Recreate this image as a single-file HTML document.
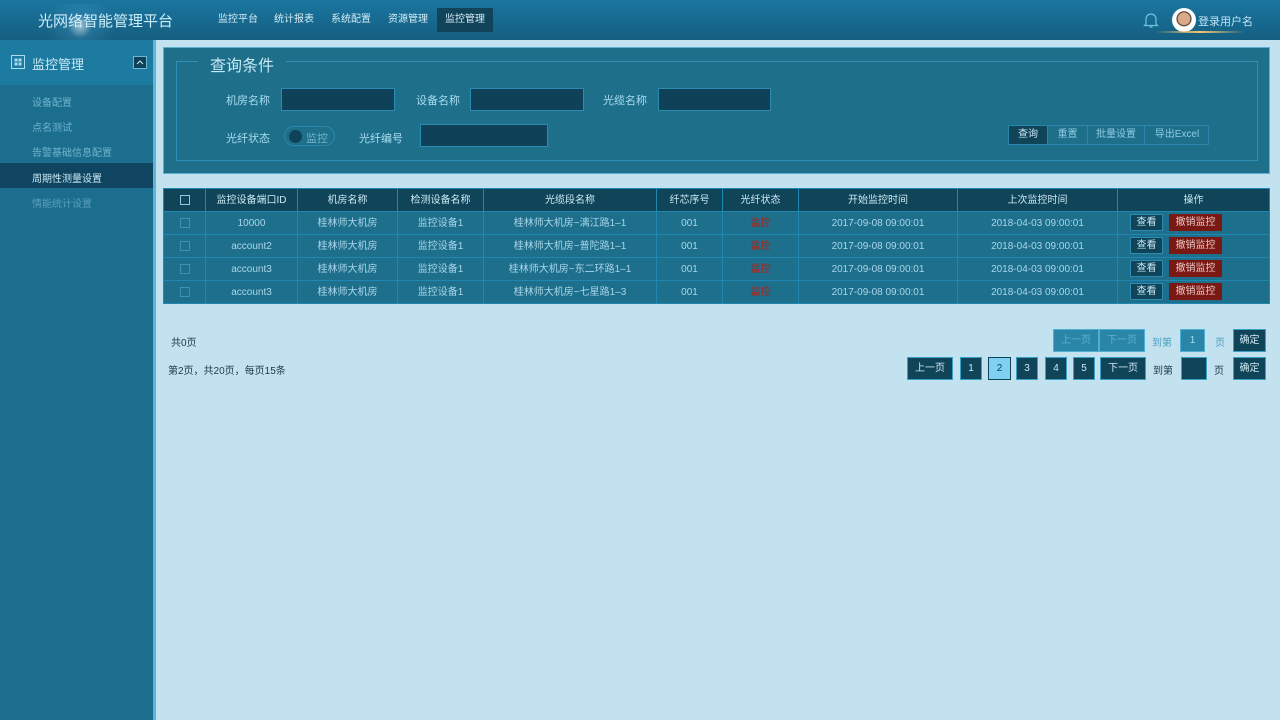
<!DOCTYPE html>
<html><head><meta charset="utf-8"><style>
*{margin:0;padding:0;box-sizing:border-box}
body{width:1280px;height:720px;overflow:hidden;background:#c3e2ef;font-family:"Liberation Sans","Noto Sans CJK SC",sans-serif;font-size:11px;color:#a9d6ea;position:relative}
.abs{position:absolute}
#hd{left:0;top:0;width:1280px;height:40px;background:linear-gradient(#1a76a0,#155e80)}
#hd .t{left:38px;top:10px;font-size:15px;color:#cdeefa}
.nav{top:8px;height:24px;line-height:24px;font-size:10px;color:#d3ecf6;text-align:center}
#sb{left:0;top:40px;width:153px;height:680px;background:#1c6e8f}
#sb .top{left:0;top:0;width:153px;height:45px;background:#1d7aa1}
#sbb{left:153px;top:40px;width:3px;height:680px;background:#5fb6d8}
.mi{left:32px;font-size:10px;color:#6fb3cc}
.panel{left:163px;top:47px;width:1107px;height:127px;background:#1e6f8a;border:1px solid #5fb0d0}
.fs{left:176px;top:61px;width:1082px;height:100px;border:1px solid #2f8fb4}
.lab{font-size:11px;color:#a9dcef}
.inp{height:23px;background:#0f4259;border:1px solid #2d8ab0}
table{position:absolute;left:163px;top:188px;width:1107px;border-collapse:collapse;table-layout:fixed;font-size:10px;color:#a9d6ea}
td,th{border:1px solid #1e88b2;height:23px;padding:0;line-height:21px;text-align:center;font-weight:normal;white-space:nowrap;overflow:hidden}
th{background:#0f4459;color:#cde9f3}
td{background:#1e6f8b}
td.op{text-align:left;padding-left:12px}
.cb{display:inline-block;width:10px;height:10px;border:1px solid #3b92b4;vertical-align:middle}
.red{color:#a3261e}
.bv{display:inline-block;width:33px;height:17px;line-height:15px;text-align:center;background:#0f4459;border:1px solid #2d8ab0;color:#cbe7f2;vertical-align:middle}
.bc{display:inline-block;width:53px;height:17px;line-height:17px;text-align:center;background:#7a1813;color:#e8c9c6;margin-left:6px;vertical-align:middle}
.pb{height:23px;line-height:21px;background:#0f4459;border:1px solid #3aa0c6;color:#cfe9f3;text-align:center;font-size:10px;top:357px}
</style></head><body>
<div id="hd" class="abs">
<div class="abs" style="left:10px;top:4px;width:110px;height:40px;background:radial-gradient(circle at 70px 22px,rgba(255,255,255,.6),rgba(120,200,255,.15) 12px,transparent 35px)"></div>
<div class="abs t">光网络智能管理平台</div>
<div class="abs nav" style="left:210px;width:56px">监控平台</div>
<div class="abs nav" style="left:266px;width:56px">统计报表</div>
<div class="abs nav" style="left:323px;width:56px">系统配置</div>
<div class="abs nav" style="left:380px;width:56px">资源管理</div>
<div class="abs nav" style="left:437px;width:56px;background:#11435a">监控管理</div>
<svg class="abs" style="left:1143px;top:11px" width="16" height="18" viewBox="0 0 16 18"><path d="M3 13V8a5 5 0 0 1 10 0v5l1.5 1.5h-13Z M6.5 16h3" fill="none" stroke="#6ec3e3" stroke-width="1.2"/></svg>
<div class="abs" style="left:1172px;top:8px;width:24px;height:24px;border-radius:50%;background:radial-gradient(circle at 50% 45%,#d9a98a 0 6px,#3a2a22 7px,#fff 8px)"></div>
<div class="abs" style="left:1198px;top:13px;font-size:11px;color:#bfe6f5">登录用户名</div>
<div class="abs" style="left:1155px;top:31px;width:90px;height:2px;background:linear-gradient(90deg,transparent,#f5c56b,transparent)"></div>
</div>
<div id="sb" class="abs"><div class="abs top"></div>
<svg class="abs" style="left:11px;top:15px" width="14" height="14"><rect x="0.5" y="0.5" width="13" height="13" fill="none" stroke="#a9dcef"/><rect x="3.5" y="3.5" width="3" height="3" fill="#a9dcef"/><rect x="7.5" y="3.5" width="3" height="3" fill="#a9dcef"/><rect x="3.5" y="7.5" width="3" height="3" fill="#a9dcef"/><rect x="7.5" y="7.5" width="3" height="3" fill="#a9dcef"/></svg>
<div class="abs" style="left:32px;top:14px;font-size:13px;color:#cbe9f5">监控管理</div>
<div class="abs" style="left:133px;top:16px;width:14px;height:13px;background:#0f4259;border:1px solid #6ab8d5"><svg width="12" height="11" style="display:block"><path d="M3 7l3-3 3 3" fill="none" stroke="#cbe9f5"/></svg></div>
<div class="abs mi" style="top:54px">设备配置</div>
<div class="abs mi" style="top:79px">点名测试</div>
<div class="abs mi" style="top:104px">告警基础信息配置</div>
<div class="abs" style="left:0;top:123px;width:153px;height:25px;background:#0f4560"></div>
<div class="abs mi" style="top:130px;color:#cbe9f5">周期性测量设置</div>
<div class="abs mi" style="top:155px;color:#5a9fb9">情能统计设置</div>
</div>
<div id="sbb" class="abs"></div>
<div class="abs panel"></div>
<div class="abs fs"></div>
<div class="abs" style="left:198px;top:52px;width:88px;height:20px;background:#1e6f8a;font-size:16px;color:#c7e8f5;text-align:center">查询条件</div>
<div class="abs lab" style="left:226px;top:92px">机房名称</div><div class="abs inp" style="left:281px;top:88px;width:114px"></div>
<div class="abs lab" style="left:416px;top:92px">设备名称</div><div class="abs inp" style="left:470px;top:88px;width:114px"></div>
<div class="abs lab" style="left:603px;top:92px">光缆名称</div><div class="abs inp" style="left:658px;top:88px;width:113px"></div>
<div class="abs lab" style="left:226px;top:130px">光纤状态</div>
<div class="abs" style="left:284px;top:126px;width:51px;height:20px;border-radius:10px;border:1px solid #2b86ab"><div class="abs" style="left:4px;top:3px;width:13px;height:13px;border-radius:50%;background:#0f4259"></div><div class="abs" style="left:21px;top:3px;font-size:11px;color:#6fb3cc">监控</div></div>
<div class="abs lab" style="left:359px;top:130px">光纤编号</div><div class="abs inp" style="left:420px;top:124px;width:128px"></div>
<div class="abs" style="left:1008px;top:125px;width:201px;height:20px;border:1px solid #2b86ab;font-size:10px;line-height:18px;color:#8fcbe2">
<span class="abs" style="left:0;width:38px;height:18px;background:#0f4459;color:#cbe7f2;text-align:center">查询</span>
<span class="abs" style="left:38px;width:40px;text-align:center;border-left:1px solid #2b86ab">重置</span>
<span class="abs" style="left:78px;width:57px;text-align:center;border-left:1px solid #2b86ab">批量设置</span>
<span class="abs" style="left:135px;width:65px;text-align:center;border-left:1px solid #2b86ab">导出Excel</span></div>
<table>
<colgroup><col style="width:42px"><col style="width:92px"><col style="width:100px"><col style="width:86px"><col style="width:173px"><col style="width:66px"><col style="width:76px"><col style="width:159px"><col style="width:160px"><col style="width:152px"></colgroup>
<tr><th><span class="cb" style="border-color:#8cc9e0"></span></th><th>监控设备端口ID</th><th>机房名称</th><th>检测设备名称</th><th>光缆段名称</th><th>纤芯序号</th><th>光纤状态</th><th>开始监控时间</th><th>上次监控时间</th><th>操作</th></tr>
<tr><td><span class="cb"></span></td><td>10000</td><td>桂林师大机房</td><td>监控设备1</td><td>桂林师大机房~漓江路1–1</td><td>001</td><td class="red">监控</td><td>2017-09-08 09:00:01</td><td>2018-04-03 09:00:01</td><td class="op"><span class="bv">查看</span><span class="bc">撤销监控</span></td></tr>
<tr><td><span class="cb"></span></td><td>account2</td><td>桂林师大机房</td><td>监控设备1</td><td>桂林师大机房~普陀路1–1</td><td>001</td><td class="red">监控</td><td>2017-09-08 09:00:01</td><td>2018-04-03 09:00:01</td><td class="op"><span class="bv">查看</span><span class="bc">撤销监控</span></td></tr>
<tr><td><span class="cb"></span></td><td>account3</td><td>桂林师大机房</td><td>监控设备1</td><td>桂林师大机房~东二环路1–1</td><td>001</td><td class="red">监控</td><td>2017-09-08 09:00:01</td><td>2018-04-03 09:00:01</td><td class="op"><span class="bv">查看</span><span class="bc">撤销监控</span></td></tr>
<tr><td><span class="cb"></span></td><td>account3</td><td>桂林师大机房</td><td>监控设备1</td><td>桂林师大机房~七星路1–3</td><td>001</td><td class="red">监控</td><td>2017-09-08 09:00:01</td><td>2018-04-03 09:00:01</td><td class="op"><span class="bv">查看</span><span class="bc">撤销监控</span></td></tr>
</table>
<div class="abs" style="left:171px;top:334px;font-size:10px;color:#1d3a48">共0页</div>
<div class="abs" style="left:168px;top:362px;font-size:10px;color:#1d3a48">第2页，共20页，每页15条</div>
<div class="abs pb" style="top:329px;left:1053px;width:46px;background:#2a86a8;color:#5fb0d0;border-color:#4fb0d4">上一页</div>
<div class="abs pb" style="top:329px;left:1099px;width:46px;background:#2a86a8;color:#5fb0d0;border-color:#4fb0d4">下一页</div>
<div class="abs" style="left:1152px;top:334px;font-size:10px;color:#4a9fc2">到第</div>
<div class="abs pb" style="top:329px;left:1180px;width:25px;background:#2a86a8;color:#a9dcef;border-color:#4fb0d4">1</div>
<div class="abs" style="left:1215px;top:334px;font-size:10px;color:#4a9fc2">页</div>
<div class="abs pb" style="top:329px;left:1233px;width:33px">确定</div>
<div class="abs pb" style="left:907px;width:46px">上一页</div>
<div class="abs pb" style="left:960px;width:22px">1</div>
<div class="abs pb" style="left:988px;width:23px;background:#7fd0f2;color:#0f4459;border-color:#0f4459">2</div>
<div class="abs pb" style="left:1016px;width:22px">3</div>
<div class="abs pb" style="left:1045px;width:22px">4</div>
<div class="abs pb" style="left:1073px;width:22px">5</div>
<div class="abs pb" style="left:1100px;width:46px">下一页</div>
<div class="abs" style="left:1153px;top:362px;font-size:10px;color:#1d3a48">到第</div>
<div class="abs pb" style="left:1181px;width:26px"></div>
<div class="abs" style="left:1214px;top:362px;font-size:10px;color:#1d3a48">页</div>
<div class="abs pb" style="left:1233px;width:33px">确定</div>
</body></html>
